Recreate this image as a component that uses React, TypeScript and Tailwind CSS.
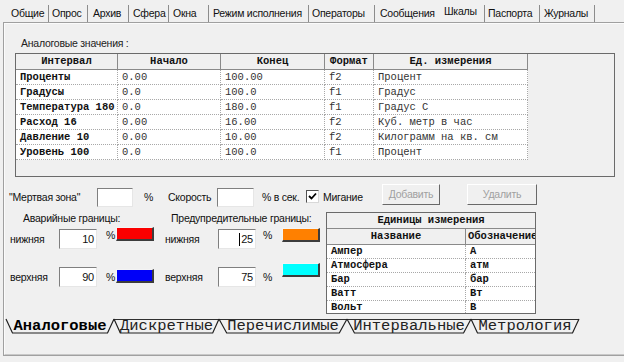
import React from "react";

const UI = "font-['Liberation_Sans',Arial,sans-serif] text-[10.5px] tracking-[-0.25px] leading-[13px] text-[#111]";
const MONO = "font-['Liberation_Mono','Courier_New',monospace] tracking-normal";

const topTabs = [
  { t: "Общие", ml: "ml-[11px]", w: "w-[37px]", sep: true, sel: false },
  { t: "Опрос", ml: "ml-[3px]", w: "w-[35px]", sep: true, sel: false },
  { t: "Архив", ml: "ml-[5px]", w: "w-[35px]", sep: true, sel: false },
  { t: "Сфера", ml: "ml-[4px]", w: "w-[35px]", sep: true, sel: false },
  { t: "Окна", ml: "ml-[4px]", w: "w-[35px]", sep: true, sel: false },
  { t: "Режим исполнения", ml: "ml-[4px]", w: "w-[95px]", sep: true, sel: false },
  { t: "Операторы", ml: "ml-[3px]", w: "w-[62px]", sep: true, sel: false },
  { t: "Сообщения", ml: "ml-[5px]", w: "w-[64px]", sep: false, sel: false },
  { t: "Шкалы", ml: "ml-0", w: "w-[40px]", sep: true, sel: true },
  { t: "Паспорта", ml: "ml-[3px]", w: "w-[51px]", sep: true, sel: false },
  { t: "Журналы", ml: "ml-[4px]", w: "w-[50px]", sep: true, sel: false },
];

const cols = ["w-[102px]", "w-[103px]", "w-[104px]", "w-[49px]", "w-[154px]"];
const heads = ["Интервал", "Начало", "Конец", "Формат", "Ед. измерения"];
const rows = [
  ["Проценты", "0.00", "100.00", "f2", "Процент"],
  ["Градусы", "0.0", "100.0", "f1", "Градус"],
  ["Температура 180", "0.0", "180.0", "f1", "Градус С"],
  ["Расход 16", "0.00", "16.00", "f2", "Куб. метр в час"],
  ["Давление 10", "0.00", "10.00", "f2", "Килограмм на кв. см"],
  ["Уровень 100", "0.0", "100.0", "f1", "Процент"],
];

const units = [
  ["Ампер", "А"],
  ["Атмосфера", "атм"],
  ["Бар", "бар"],
  ["Ватт", "Вт"],
  ["Вольт", "В"],
];

const bottomTabs = [
  { t: "Аналоговые", w: "w-[108px]", sel: true },
  { t: "Дискретные", w: "w-[105px]", sel: false },
  { t: "Перечислимые", w: "w-[128px]", sel: false },
  { t: "Интервальные", w: "w-[124px]", sel: false },
  { t: "Метрология", w: "w-[108px]", sel: false },
];

function Input({ value, caret }: { value?: string; caret?: boolean }) {
  return (
    <div className="w-full h-full bg-white border border-t-[#7f7f7f] border-l-[#7f7f7f] border-b-[#e6e6e6] border-r-[#e6e6e6] flex items-center justify-end pr-[2px] text-[11px]">
      {caret && <span className="w-px h-[13px] bg-black mr-[1px]" />}
      {value}
    </div>
  );
}

function Swatch({ color }: { color: string }) {
  return <div className={"w-full h-full border-t border-l border-t-[#f4f4f4] border-l-[#f4f4f4] border-b-2 border-r-2 border-b-[#3c3c3c] border-r-[#3c3c3c] " + color} />;
}

function TabShape({ sel }: { sel: boolean }) {
  return (
    <svg className="absolute inset-0 w-full h-full overflow-visible" preserveAspectRatio="none" viewBox="0 0 100 14">
      {!sel && <line x1="0" y1="0.5" x2="100" y2="0.5" stroke="#303030" strokeWidth="1" vectorEffect="non-scaling-stroke" />}
      <polyline points="0,0 6,14 94,14 100,0" fill="none" stroke="#202020" strokeWidth="1.2" vectorEffect="non-scaling-stroke" />
    </svg>
  );
}

export default function App() {
  return (
    <div className={"w-[624px] h-[362px] bg-[#f0f0f0] overflow-hidden flex flex-col " + UI}>
      {/* top tabs */}
      <div className="h-[22px] flex items-center pt-[4px] shrink-0">
        {topTabs.map((tb) => (
          <div key={tb.t} className={"flex items-center shrink-0 " + tb.ml}>
            <span className={"whitespace-nowrap " + tb.w + (tb.sel ? " mb-[3px]" : "")}>{tb.t}</span>
            {tb.sep && <span className="w-px h-[17px] bg-[#8c8c8c]" />}
          </div>
        ))}
      </div>

      {/* page */}
      <div className="ml-[3px] h-[334px] border-t border-l border-b border-[#a0a0a0] shrink-0">
        <div className="h-full border-t border-l border-b border-t-[#fbfbfb] border-l-[#fbfbfb] border-b-[#c8c8c8] flex flex-col">
          <div className="mt-[13px] pl-[16px] text-[#222]">Аналоговые значения :</div>

          {/* analog grid */}
          <div className={"mt-[3px] ml-[10px] w-[600px] h-[124px] border border-[#6a6a6a] overflow-hidden text-[10.5px] leading-[13px] " + MONO}>
            <div className="flex">
              {heads.map((h, i) => (
                <div key={h} className={"h-[16px] shrink-0 flex items-center justify-center font-bold bg-[#f0f0f0] border-r border-b border-[#8a8a8a] " + cols[i]}>
                  {h}
                </div>
              ))}
            </div>
            {rows.map((r) => (
              <div key={r[0]} className="flex">
                {r.map((c, i) => (
                  <div key={i} className={"h-[15px] shrink-0 flex items-center pl-[4px] bg-white whitespace-nowrap overflow-hidden border-r border-b border-dotted border-[#a8a8a8] " + cols[i] + (i === 0 ? " font-bold text-[#111]" : " text-[#333]")}>
                    {c}
                  </div>
                ))}
              </div>
            ))}
          </div>

          {/* controls row */}
          <div className="mt-[7px] flex items-start h-[23px] shrink-0">
            <div className="ml-[4px] w-[88px] mt-[7px] whitespace-nowrap">"Мертвая зона"</div>
            <div className="w-[36px] h-[19px] mt-[4px]"><Input /></div>
            <div className="w-[35px] pl-[11px] mt-[7px]">%</div>
            <div className="w-[49px] mt-[7px]">Скорость</div>
            <div className="w-[37px] h-[19px] mt-[4px]"><Input /></div>
            <div className="w-[52px] pl-[8px] mt-[7px] whitespace-nowrap">% в сек.</div>
            <div className="w-[13px] h-[13px] mt-[6px] bg-white border border-t-[#505050] border-l-[#505050] border-b-[#d8d8d8] border-r-[#d8d8d8] flex items-center justify-center">
              <svg width="9" height="9" viewBox="0 0 9 9">
                <path d="M1 4 L3.5 6.5 L8 1.5" fill="none" stroke="#000" strokeWidth="1.8" />
              </svg>
            </div>
            <div className="w-[63px] pl-[4px] mt-[7px]">Мигание</div>
            <div className="w-[58px] h-[21px] border border-t-white border-l-white border-b-[#696969] border-r-[#696969] flex items-center justify-center text-[#a0a0a0]">Добавить</div>
            <div className="ml-[27px] w-[70px] h-[21px] border border-t-white border-l-white border-b-[#696969] border-r-[#696969] flex items-center justify-center text-[#a0a0a0]">Удалить</div>
          </div>

          {/* limits + units */}
          <div className="mt-[5px] flex items-start shrink-0">
            <div className="w-[321px] shrink-0 flex flex-col">
              <div className="flex h-[13px]">
                <div className="w-[166px] pl-[18px] whitespace-nowrap">Аварийные границы:</div>
                <div className="whitespace-nowrap">Предупредительные границы:</div>
              </div>
              {/* lower row */}
              <div className="mt-[2px] flex items-start h-[22px]">
                <div className="w-[54px] pl-[5px] mt-[6px]">нижняя</div>
                <div className="w-[38px] h-[20px] mt-[2px]"><Input value="10" /></div>
                <div className="w-[19px] pl-[9px] mt-[2px]">%</div>
                <div className="w-[38px] h-[14px]"><Swatch color="bg-[#fa0000]" /></div>
                <div className="w-[11px]" />
                <div className="w-[53px] mt-[6px]">нижняя</div>
                <div className="w-[38px] h-[20px] mt-[2px]"><Input value="25" caret /></div>
                <div className="w-[26px] pl-[7px] mt-[2px]">%</div>
                <div className="w-[38px] h-[14px] mt-[1px]"><Swatch color="bg-[#ff8000]" /></div>
              </div>
              {/* upper row */}
              <div className="mt-[14px] flex items-start h-[24px]">
                <div className="w-[54px] pl-[5px] mt-[8px]">верхняя</div>
                <div className="w-[38px] h-[20px] mt-[4px]"><Input value="90" /></div>
                <div className="w-[19px] pl-[9px] mt-[8px]">%</div>
                <div className="w-[38px] h-[14px] mt-[6px]"><Swatch color="bg-[#0000f8]" /></div>
                <div className="w-[11px]" />
                <div className="w-[53px] mt-[8px]">верхняя</div>
                <div className="w-[38px] h-[20px] mt-[4px]"><Input value="75" /></div>
                <div className="w-[26px] pl-[7px] mt-[8px]">%</div>
                <div className="w-[38px] h-[14px]"><Swatch color="bg-[#00ffff]" /></div>
              </div>
            </div>

            {/* units grid */}
            <div className={"w-[210px] h-[102px] border border-[#6a6a6a] overflow-hidden text-[10.5px] leading-[13px] font-bold " + MONO}>
              <div className="h-[16px] flex items-center justify-center bg-[#f0f0f0] border-b border-[#8a8a8a]">Единицы измерения</div>
              <div className="flex">
                <div className="w-[139px] h-[16px] flex items-center justify-center bg-[#f0f0f0] border-r border-b border-[#8a8a8a]">Название</div>
                <div className="w-[69px] h-[16px] flex items-center pl-[2px] bg-[#f0f0f0] border-b border-[#8a8a8a] whitespace-nowrap overflow-hidden">Обозначение</div>
              </div>
              {units.map((u) => (
                <div key={u[0]} className="flex">
                  <div className="w-[139px] h-[14px] flex items-center pl-[4px] bg-white border-r border-b border-dotted border-[#a8a8a8]">{u[0]}</div>
                  <div className="w-[69px] h-[14px] flex items-center pl-[4px] bg-white border-b border-dotted border-[#a8a8a8]">{u[1]}</div>
                </div>
              ))}
            </div>
          </div>

          {/* bottom tab set */}
          <div className={"mt-[5px] ml-[1px] flex h-[14px] text-[15.5px] leading-[14px] " + MONO}>
            {bottomTabs.map((b) => (
              <div key={b.t} className={"relative shrink-0 flex items-center justify-center " + b.w + (b.sel ? " font-bold text-black" : " text-[#222]")}>
                <TabShape sel={b.sel} />
                <span className="relative">{b.t}</span>
              </div>
            ))}
          </div>
        </div>
      </div>
    </div>
  );
}
